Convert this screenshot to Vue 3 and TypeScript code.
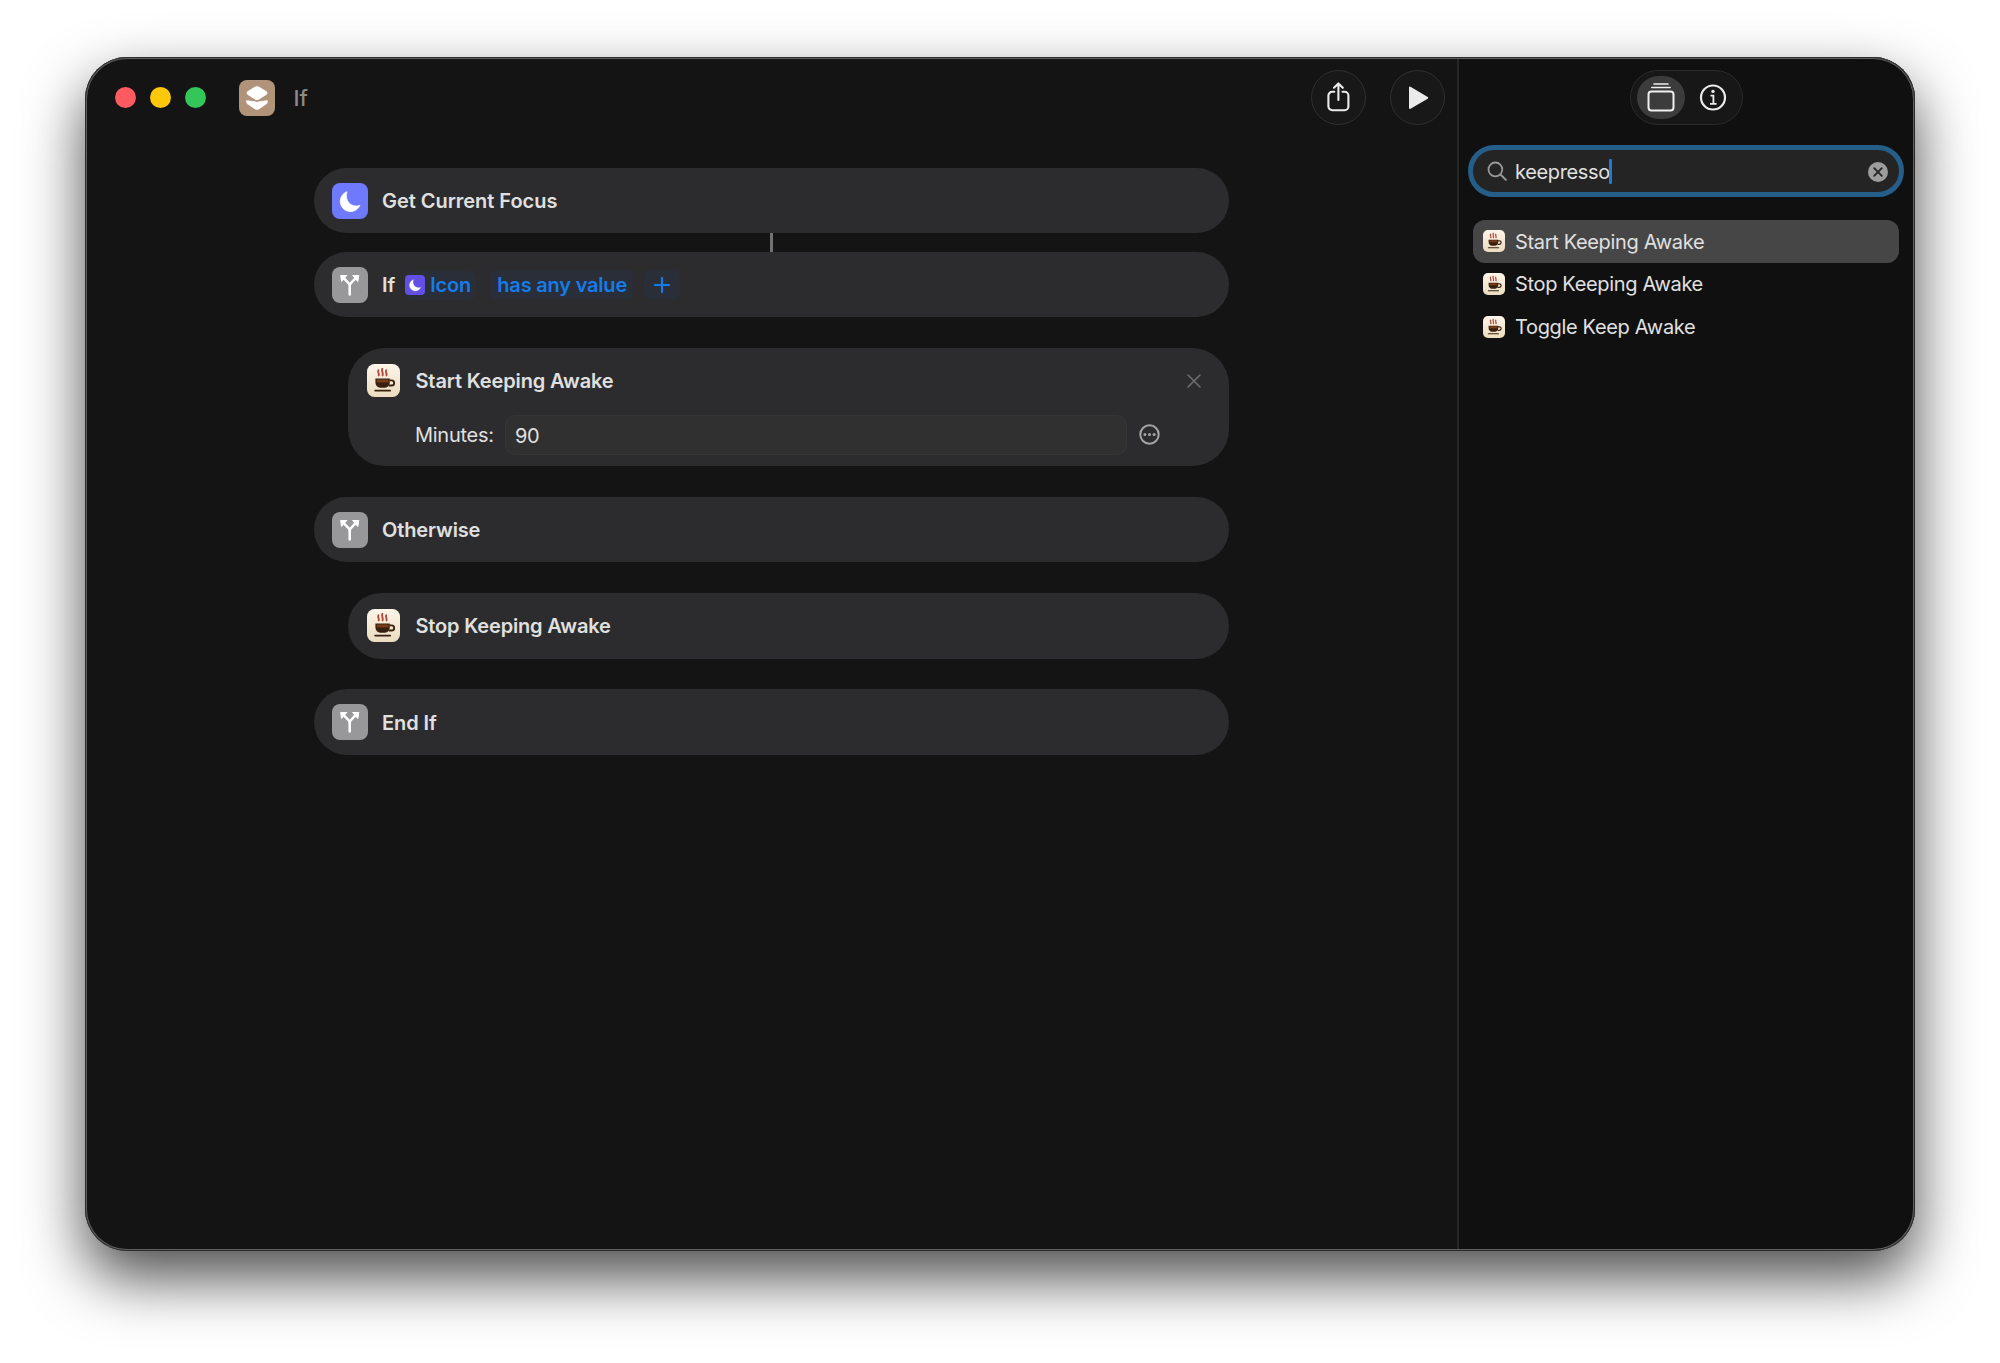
<script setup lang="ts">
type Glyph = 'moon' | 'branch' | 'cup'
interface Action {
  title: string
  glyph: Glyph
  spacing: number
  nested?: boolean
  condition?: boolean
  minutes?: string
}

const actions: Action[] = [
  { title: 'Get Current Focus', glyph: 'moon', spacing: -0.03 },
  { title: 'If', glyph: 'branch', spacing: 0, condition: true },
  { title: 'Start Keeping Awake', glyph: 'cup', spacing: -0.14, nested: true, minutes: '90' },
  { title: 'Otherwise', glyph: 'branch', spacing: -0.13 },
  { title: 'Stop Keeping Awake', glyph: 'cup', spacing: -0.17, nested: true },
  { title: 'End If', glyph: 'branch', spacing: -0.1 },
]
const results = ['Start Keeping Awake', 'Stop Keeping Awake', 'Toggle Keep Awake']
</script>

<template>
  <svg class="defs" width="0" height="0" aria-hidden="true">
    <defs>
      <linearGradient id="cream" x1="0" y1="0" x2="0" y2="1">
        <stop offset="0" stop-color="#fdf6ea" /><stop offset="1" stop-color="#ecdcc0" />
      </linearGradient>
      <symbol id="cup" viewBox="0 0 33 33">
        <rect width="33" height="33" rx="7.5" fill="url(#cream)" />
        <g fill="none" stroke="#b5473a" stroke-width="1.9" stroke-linecap="round">
          <path d="M11.4 6.2c-1.2 1.600 1.200 3.400.3 5.200M15.300 4.900c-1.200 1.800 1.300 4.200.3 6.500M19.200 6.200c-1.200 1.600 1.200 3.400.3 5.200" />
        </g>
        <path d="M8.400 14.600h14.400v3.200c0 3.600-2 5.900-5 5.900h-4.400c-3 0-5-2.300-5-5.900z" fill="#38200f" />
        <path d="M9.800 15.500h11.600v2.900h-11.600z" fill="#7a3d18" />
        <path d="M22.600 16.300h2a2.600 2.600 0 0 1 0 5.200h-2.800" fill="none" stroke="#38200f" stroke-width="1.800" />
        <path d="M8.200 26.600h15" stroke="#38200f" stroke-width="1.800" stroke-linecap="round" />
      </symbol>
      <symbol id="moon" viewBox="0 0 36 36">
        <path d="M15.100 8.600A10.300 10.300 0 1 0 28 22.300C20.300 25.400 12 18.400 15.100 8.600z" fill="#fff" stroke="#fff" stroke-width=".6" stroke-linejoin="round" />
      </symbol>
      <symbol id="branch" viewBox="0 0 36 36">
        <path d="M17.700 27.500V19c0-1.400-.5-2.300-1.400-3.200l-4.600-4.600M17.700 19c0-1.400.5-2.300 1.400-3.200l4.600-4.600" fill="none" stroke="#fff" stroke-width="2.500" stroke-linecap="round" />
        <path d="M8.600 8.500h6.200l-5.200 6zM26.800 8.500h-6.200l5.200 6z" fill="#fff" stroke="#fff" stroke-width="1" stroke-linejoin="round" />
      </symbol>
    </defs>
  </svg>

  <div class="desktop">
    <div class="window">
      <main class="editor">
        <header class="toolbar">
          <div class="lights"><i class="red" /><i class="yellow" /><i class="green" /></div>
          <svg class="appicon" viewBox="0 0 36 36">
            <rect width="36" height="36" rx="8" fill="#b09379" />
            <path d="M7.600 20.600v1.700c0 .8.400 1.300 1.200 1.800l6.800 4.600c1.600 1.100 3.200 1.100 4.800 0l6.800-4.600c.8-.5 1.200-1 1.200-1.800v-1.700L18 22z" fill="#fff" stroke="#fff" stroke-width=".6" stroke-linejoin="round" />
            <path d="M15.600 6.300c1.600-1 3.200-1 4.800 0l7 4.200c2.200 1.400 2.200 3.600 0 5l-7 4.500c-1.600 1-3.200 1-4.800 0l-7-4.500c-2.200-1.400-2.200-3.600 0-5z" fill="#fff" stroke="#b09379" stroke-width="1.300" />
          </svg>
          <span class="doc">If</span>
          <div class="round share">
            <svg viewBox="0 0 55 55"><g fill="none" stroke="#ebebeb" stroke-width="2.100" stroke-linecap="round" stroke-linejoin="round"><path d="M23.300 21.800h-2.100a3.800 3.800 0 0 0-3.800 3.800v10.800a3.800 3.800 0 0 0 3.800 3.800h12.400a3.800 3.800 0 0 0 3.800-3.800V25.600a3.800 3.800 0 0 0-3.800-3.800h-2.100" /><path d="M27.400 30V13.600M23 17.800l4.400-4.400 4.400 4.400" /></g></svg>
          </div>
          <div class="round">
            <svg viewBox="0 0 55 55"><path d="M20 17.600v20.400L37.200 27.800z" fill="#ebebeb" stroke="#ebebeb" stroke-width="2" stroke-linejoin="round" /></svg>
          </div>
        </header>

        <section class="flow">
          <article v-for="(a, i) in actions" :key="i" class="card" :class="{ nested: a.nested, tall: a.minutes, linked: a.condition }">
            <div v-if="a.condition" class="connector" />
            <div class="line">
              <span class="glyph" :class="a.glyph"><svg><use :href="'#' + a.glyph" /></svg></span>
              <span class="title" :style="{ letterSpacing: a.spacing + 'px' }">{{ a.title }}</span>
              <template v-if="a.condition">
                <span class="token first"><span class="mini"><svg><use href="#moon" /></svg></span><span class="word">Icon</span></span>
                <span class="token second"><span class="word">has any value</span></span>
                <span class="token plus"><svg viewBox="0 0 16 16"><path d="M8 1v14M1 8h14" stroke="#147ceb" stroke-width="2.100" stroke-linecap="round" /></svg></span>
              </template>
              <svg v-if="a.minutes" class="close" viewBox="0 0 14 14"><path d="M1 1l12 12M13 1L1 13" stroke="#6d6d6f" stroke-width="1.600" stroke-linecap="round" /></svg>
            </div>
            <div v-if="a.minutes" class="param">
              <span class="label">Minutes:</span>
              <div class="field"><span class="value">{{ a.minutes }}</span></div>
              <svg class="more" viewBox="0 0 21 21"><circle cx="10.500" cy="10.500" r="9.200" fill="none" stroke="#a5a5a7" stroke-width="2" /><g fill="#a5a5a7"><circle cx="5.900" cy="10.500" r="1.500" /><circle cx="10.500" cy="10.500" r="1.500" /><circle cx="15.100" cy="10.500" r="1.500" /></g></svg>
            </div>
          </article>
        </section>
      </main>

      <aside class="library">
        <div class="tabs">
          <span class="tab on"><svg viewBox="0 0 48 43"><g fill="none" stroke="#f0f0f0" stroke-width="2" stroke-linecap="round"><rect x="11.500" y="15.500" width="25" height="19" rx="3" /><path d="M14.800 11.600h18.400M17 8h14" stroke-width="1.500" /></g></svg></span>
          <span class="tab"><svg viewBox="0 0 48 43"><circle cx="24" cy="21.500" r="12" fill="none" stroke="#ebebeb" stroke-width="2.200" /><circle cx="24" cy="15.400" r="1.700" fill="#ebebeb" /><path d="M21.500 19.600h2.900v8M21 27.800h6.600" fill="none" stroke="#ebebeb" stroke-width="1.800" /></svg></span>
        </div>
        <div class="search">
          <svg class="lens" viewBox="0 0 22 22"><circle cx="9" cy="9" r="7.400" fill="none" stroke="#999" stroke-width="1.900" /><path d="M14.500 14.500l5.800 5.800" stroke="#999" stroke-width="2.100" stroke-linecap="round" /></svg>
          <span class="query">keepresso</span><i class="caret" />
          <svg class="clear" viewBox="0 0 20 20"><circle cx="10" cy="10" r="10" fill="#9d9d9d" /><path d="M6.200 6.200l7.600 7.600M13.800 6.200l-7.600 7.600" stroke="#242424" stroke-width="1.800" stroke-linecap="round" /></svg>
        </div>
        <ul class="results">
          <li v-for="(r, i) in results" :key="r" :class="{ active: i === 0 }">
            <svg class="cupicon"><use href="#cup" /></svg><span class="name">{{ r }}</span>
          </li>
        </ul>
      </aside>
    </div>
  </div>
</template>

<style>
body { background: #fff; overflow: hidden; }
</style>

<style scoped>
* { box-sizing: border-box; }
svg { display: block; }
.defs { position: absolute; }
.desktop { width: 2000px; height: 1363px; padding: 57px 85px; background: #fff; font: 400 20px/26px Inter, "Liberation Sans", sans-serif; color: #e0e0e0; overflow: hidden; }
.window { position: relative; width: 1830px; height: 1194px; display: flex; border-radius: 42px; background: #141414; box-shadow: 0 27px 60px rgba(0,0,0,.7); }
.window::after { content: ""; position: absolute; inset: 0; border-radius: 42px; box-shadow: inset 0 0 0 1px #2c2c2c, inset 0 0 0 2px #5e5e5e; pointer-events: none; }
.editor { width: 1372px; }
.library { flex: 1; background: #101010; border-left: 2px solid #282828; border-radius: 0 42px 42px 0; }
.toolbar { height: 81px; display: flex; align-items: center; padding: 0 12px 0 29.5px; }
.lights { display: flex; gap: 14px; }
.lights i { width: 21px; height: 21px; border-radius: 50%; }
.red { background: #ff5a5f; }
.yellow { background: #fdc80a; }
.green { background: #33c759; }
.appicon { width: 36px; height: 36px; margin-left: 33.500px; }
.doc { margin-left: 18.500px; color: #8a8a8a; font-size: 22px; font-weight: 550; }
.round { width: 55px; height: 55px; border-radius: 50%; border: 1.500px solid #303030; background: #181818; margin-left: 24px; }
.round svg { width: 55px; height: 55px; margin: -1px; }
.share { margin-left: auto; }
.flow { padding: 30px 0 0 229px; width: 1143.500px; }
.card { position: relative; height: 65.400px; border-radius: 33px; background: #2c2c2e; padding: 0 18px; margin-top: 30.800px; }
.card:first-child { margin-top: 0; }
.linked { margin-top: 18.600px; }
.nested { margin-left: 34px; padding: 0 19px; }
.tall { height: 118px; border-radius: 37px; }
.connector { position: absolute; left: 456px; top: -18.600px; width: 3px; height: 18.600px; background: #727274; }
.line { height: 65.400px; display: flex; align-items: center; }
.glyph { width: 36px; height: 36px; border-radius: 8px; flex: none; }
.glyph svg { width: 100%; height: 100%; }
.moon { background: #6f79fb; }
.branch { background: #98989b; }
.cup { width: 33px; height: 33px; }
.title { font-weight: 600; margin-left: 14px; padding-top: 1px; white-space: nowrap; }
.nested .title { margin-left: 15.500px; }
.token { display: flex; align-items: center; height: 29px; border-radius: 7px; background: #2a2e38; color: #147ceb; font-weight: 600; white-space: nowrap; }
.first { margin-left: 10px; width: 71px; gap: 5px; margin-top: 1px; }
.mini { width: 20px; height: 20px; border-radius: 4px; background: #6250e4; }
.mini svg { width: 20px; height: 20px; }
.first .word { letter-spacing: -.25px; }
.second { margin-left: 13px; width: 145px; padding-left: 8px; letter-spacing: -.2px; }
.second .word { padding-top: 1px; }
.plus { margin-left: 10px; width: 36px; justify-content: center; }
.plus svg { width: 16px; height: 16px; margin-top: 1px; }
.close { width: 14px; height: 14px; margin-left: auto; margin-right: 9px; margin-top: 1px; }
.param { display: flex; align-items: center; margin-top: 1px; height: 40px; padding-left: 48px; }
.label { width: 90px; letter-spacing: -.27px; padding-top: 1px; }
.field { width: 622px; height: 40px; border: 1px solid #363638; border-radius: 10px; background: #303030; padding: 7px 9px; }
.value { letter-spacing: -.3px; }
.more { width: 21px; height: 21px; margin-left: 12px; }
.tabs { margin: 13px 0 0 171px; width: 113px; height: 55px; border: 1.500px solid #2b2b2b; border-radius: 28px; background: #171717; display: flex; align-items: center; padding-left: 5.500px; gap: 4px; }
.tab { width: 48px; height: 43px; border-radius: 22px; }
.tab svg { width: 48px; height: 43px; }
.on { background: #3c3c3c; }
.search { margin: 20px 0 0 9px; width: 436px; height: 52px; border: 5.500px solid #245e89; border-radius: 26px; background: #242424; display: flex; align-items: center; padding-left: 13.500px; }
.lens { width: 20.500px; height: 20.500px; margin-right: 8px; }
.query { letter-spacing: -.35px; padding-top: 1px; }
.caret { width: 3px; height: 25px; background: #1d78e0; border-radius: 1px; margin-left: -1px; }
.clear { width: 20px; height: 20px; margin-left: auto; margin-right: 11px; margin-top: 1px; }
.results { list-style: none; margin: 23px 0 0 14px; padding: 0; width: 426px; }
.results li { height: 42.670px; display: flex; align-items: center; padding-left: 10px; border-radius: 12px; }
.active { background: #464646; }
.cupicon { width: 22px; height: 22px; margin-right: 10px; }
.name { letter-spacing: -.34px; padding-top: 1px; }
</style>
